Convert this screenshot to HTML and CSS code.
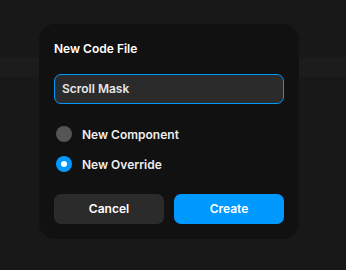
FILE: index.html
```html
<!DOCTYPE html>
<html>
<head>
<meta charset="utf-8">
<link rel="stylesheet" href="styles.css">
</head>
<body>
<div class="band"></div>
<div class="dialog">
  <div class="title">New Code File</div>
  <div class="input">Scroll Mask</div>
  <div class="options">
    <div class="option"><span class="radio"></span><span class="label">New Component</span></div>
    <div class="option"><span class="radio on"></span><span class="label">New Override</span></div>
  </div>
  <div class="buttons">
    <div class="btn cancel">Cancel</div>
    <div class="btn create">Create</div>
  </div>
</div>
</body>
</html>
```
FILE: styles.css
```css
html, body {
  margin: 0;
  padding: 0;
}
body {
  width: 346px;
  height: 270px;
  background: #181818;
  font-family: Inter, "Noto Sans", sans-serif;
  position: relative;
  overflow: hidden;
}
.band {
  margin-top: 58px;
  height: 19px;
  background: #1c1c1c;
}
.dialog {
  position: absolute;
  left: 39px;
  top: 24px;
  width: 230px;
  padding: 15px;
  background: #111111;
  border-radius: 16px;
  display: flex;
  flex-direction: column;
}
.title {
  height: 20px;
  line-height: 20px;
  font-size: 12px;
  font-weight: 600;
  color: #ffffff;
}
.input {
  margin-top: 15px;
  height: 28px;
  line-height: 28px;
  border: 1px solid #0099ff;
  border-radius: 7px;
  background: #2b2b2b;
  padding-left: 7px;
  font-size: 12px;
  font-weight: 600;
  color: #e6e6e6;
}
.options {
  margin-top: 20px;
  display: flex;
  flex-direction: column;
  gap: 10px;
}
.option {
  height: 20px;
  display: flex;
  align-items: center;
  gap: 10px;
  padding-left: 2px;
}
.radio {
  width: 16px;
  height: 16px;
  border-radius: 50%;
  background: #555555;
  display: flex;
  align-items: center;
  justify-content: center;
}
.radio.on {
  background: #0099ff;
}
.radio.on::after {
  content: "";
  width: 6px;
  height: 6px;
  border-radius: 50%;
  background: #ffffff;
}
.label {
  font-size: 12px;
  font-weight: 600;
  color: #eeeeee;
}
.buttons {
  margin-top: 20px;
  display: flex;
  gap: 10px;
}
.btn {
  flex: 1;
  height: 30px;
  line-height: 30px;
  text-align: center;
  border-radius: 7px;
  font-size: 12px;
  font-weight: 600;
  color: #ffffff;
}
.cancel {
  background: #2b2b2b;
}
.create {
  background: #0099ff;
}
```
